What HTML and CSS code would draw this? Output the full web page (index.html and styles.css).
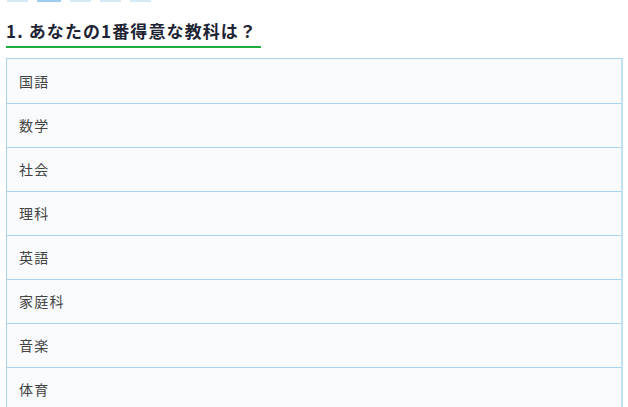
FILE: index.html
```html
<!DOCTYPE html>
<html lang="ja">
<head>
<meta charset="utf-8">
<link rel="stylesheet" href="styles.css">
</head>
<body>
<div class="page">
  <div class="steps">
    <span class="step"></span>
    <span class="step active"></span>
    <span class="step"></span>
    <span class="step"></span>
    <span class="step"></span>
  </div>
  <h2 class="question">1. あなたの1番得意な教科は？</h2>
  <ul class="choices">
    <li class="choice">国語</li>
    <li class="choice">数学</li>
    <li class="choice">社会</li>
    <li class="choice">理科</li>
    <li class="choice">英語</li>
    <li class="choice">家庭科</li>
    <li class="choice">音楽</li>
    <li class="choice">体育</li>
  </ul>
</div>
</body>
</html>
```
FILE: styles.css
```css
html, body {
  margin: 0;
  padding: 0;
  background: #ffffff;
}
body {
  font-family: "Noto Sans CJK JP", "Noto Sans", sans-serif;
  color: #333;
}
.page {
  padding: 0 5px 0 6px;
}
.steps {
  display: flex;
  gap: 9px;
  height: 2px;
  padding-left: 1px;
}
.step {
  display: block;
  width: 21px;
  height: 2px;
  background: #d6e9f7;
}
.step.active {
  width: 24px;
  background: #9ccdee;
}
.question {
  display: inline-block;
  margin: 18px 0 0 0;
  padding: 0 4px 4px 0;
  font-size: 17px;
  font-weight: 700;
  line-height: 22px;
  letter-spacing: 1.1px;
  color: #1e2433;
  border-bottom: 2px solid #1fae3e;
}
.choices {
  list-style: none;
  margin: 10px 0 0 0;
  padding: 0;
  border-top: 1px solid #a9d3ef;
  border-left: 1px solid #a9d3ef;
  border-right: 2px solid #c3e0f4;
}
.choice {
  height: 43px;
  line-height: 43px;
  padding-left: 12px;
  font-size: 14px;
  letter-spacing: 1.2px;
  color: #444;
  background: #f8fafc;
  border-bottom: 1px solid #a9d3ef;
}
.choice:first-child {
  height: 44px;
  line-height: 44px;
}
```
